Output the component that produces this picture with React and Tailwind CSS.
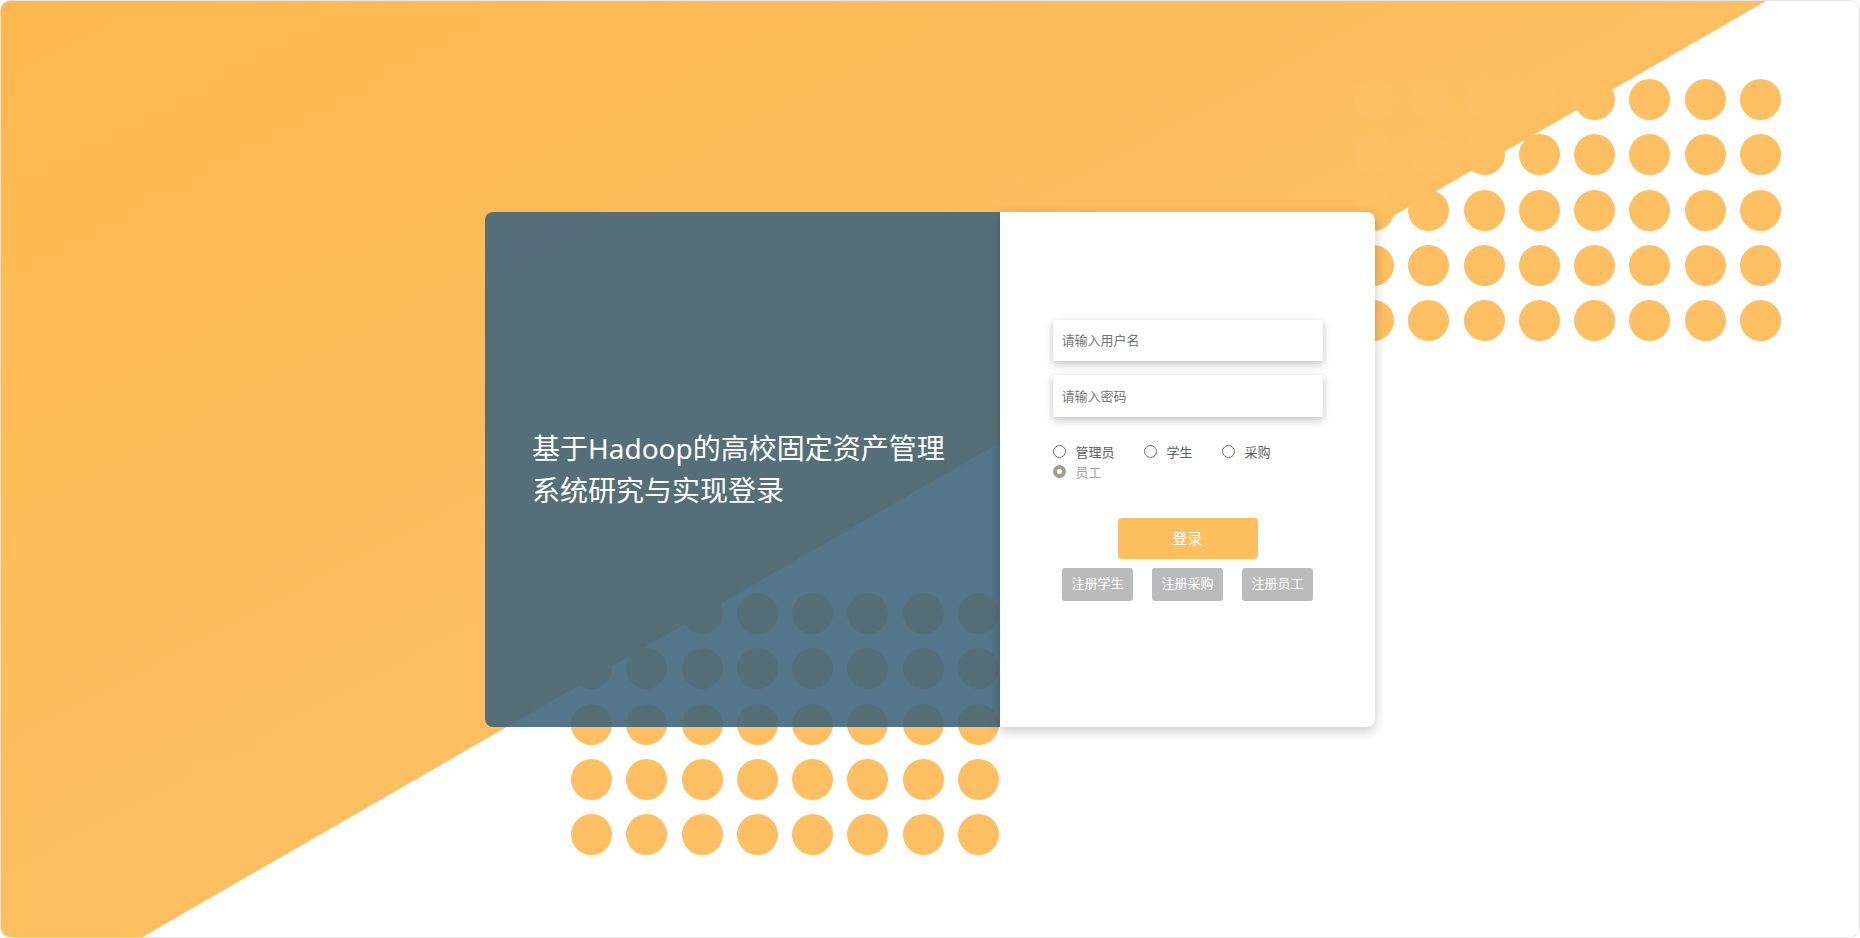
import { useState } from "react";

const FONT = { fontFamily: '"Noto Sans", "Noto Sans CJK SC", sans-serif' };

function Dots({ className }) {
  return (
    <div className={"absolute grid grid-cols-8 gap-x-[14.3px] gap-y-[14.3px] " + className}>
      {Array.from({ length: 40 }).map((_, i) => (
        <span key={i} className="block w-[41px] h-[41px] rounded-full bg-[#fdbf61]" />
      ))}
    </div>
  );
}

function Radio({ label, checked, onPick }) {
  return (
    <label className="flex items-center h-[20px] cursor-pointer" onClick={onPick}>
      {checked ? (
        <span className="w-[13px] h-[13px] rounded-full bg-[#a39a94] flex items-center justify-center">
          <span className="w-[5px] h-[5px] rounded-full bg-white" />
        </span>
      ) : (
        <span className="w-[13px] h-[13px] rounded-full border border-[#6f6f6f] bg-white" />
      )}
      <span className={"ml-[10px] text-[13px] leading-[20px] " + (checked ? "text-[#a5a5a5]" : "text-[#5f5f5f]")}>
        {label}
      </span>
    </label>
  );
}

export default function App() {
  const [role, setRole] = useState("员工");
  const roles = ["管理员", "学生", "采购", "员工"];

  return (
    <div style={FONT} className="relative w-full h-[938px] overflow-hidden bg-white border border-[#e4e4e4] rounded-[10px]">
      {/* orange diagonal background */}
      <svg className="absolute inset-0" width="1860" height="938" viewBox="0 0 1860 938">
        <defs>
          <linearGradient id="og" x1="0" y1="0" x2="1" y2="1">
            <stop offset="0" stopColor="#ffb84e" />
            <stop offset="0.45" stopColor="#fdbe60" />
            <stop offset="1" stopColor="#fdc064" />
          </linearGradient>
        </defs>
        <polygon points="0,0 1765,0 138,938 0,938" fill="url(#og)" />
      </svg>

      <Dots className="left-[1352px] top-[78px]" />
      <Dots className="left-[570px] top-[592px]" />

      <div className="relative h-full flex items-center justify-center">
        <div className="flex w-[890px] h-[515px]">
          <div className="w-[515px] h-full rounded-l-[8px] bg-[rgba(67,102,124,0.9)] flex items-center pl-[47px]">
            <h1 className="w-[430px] text-white text-[28px] leading-[42px] font-normal">
              基于Hadoop的高校固定资产管理系统研究与实现登录
            </h1>
          </div>

          <div className="w-[375px] h-full rounded-r-[8px] bg-white shadow-[0_4px_12px_rgba(0,0,0,0.22)] flex flex-col items-center pt-[108px]">
            <input
              type="text"
              placeholder="请输入用户名"
              className="w-[270px] h-[41px] px-[9px] text-[13px] bg-white outline-none shadow-[0_3px_8px_rgba(0,0,0,0.25)] placeholder:text-[#777]"
            />
            <input
              type="password"
              placeholder="请输入密码"
              className="mt-[14px] w-[270px] h-[42px] px-[9px] text-[13px] bg-white outline-none shadow-[0_3px_8px_rgba(0,0,0,0.25)] placeholder:text-[#777]"
            />

            <div className="mt-[25px] w-[270px] flex flex-wrap gap-x-[29px]">
              {roles.map((r) => (
                <Radio key={r} label={r} checked={role === r} onPick={() => setRole(r)} />
              ))}
            </div>

            <button className="mt-[36px] w-[140px] h-[41px] rounded-[4px] bg-[#fdbe5e] text-white text-[15px]">
              登录
            </button>

            <div className="mt-[9px] flex gap-[19px]">
              {["注册学生", "注册采购", "注册员工"].map((t) => (
                <button key={t} className="w-[71px] h-[33px] rounded-[3px] bg-[#bbbbbb] text-white text-[13px]">
                  {t}
                </button>
              ))}
            </div>
          </div>
        </div>
      </div>
    </div>
  );
}
